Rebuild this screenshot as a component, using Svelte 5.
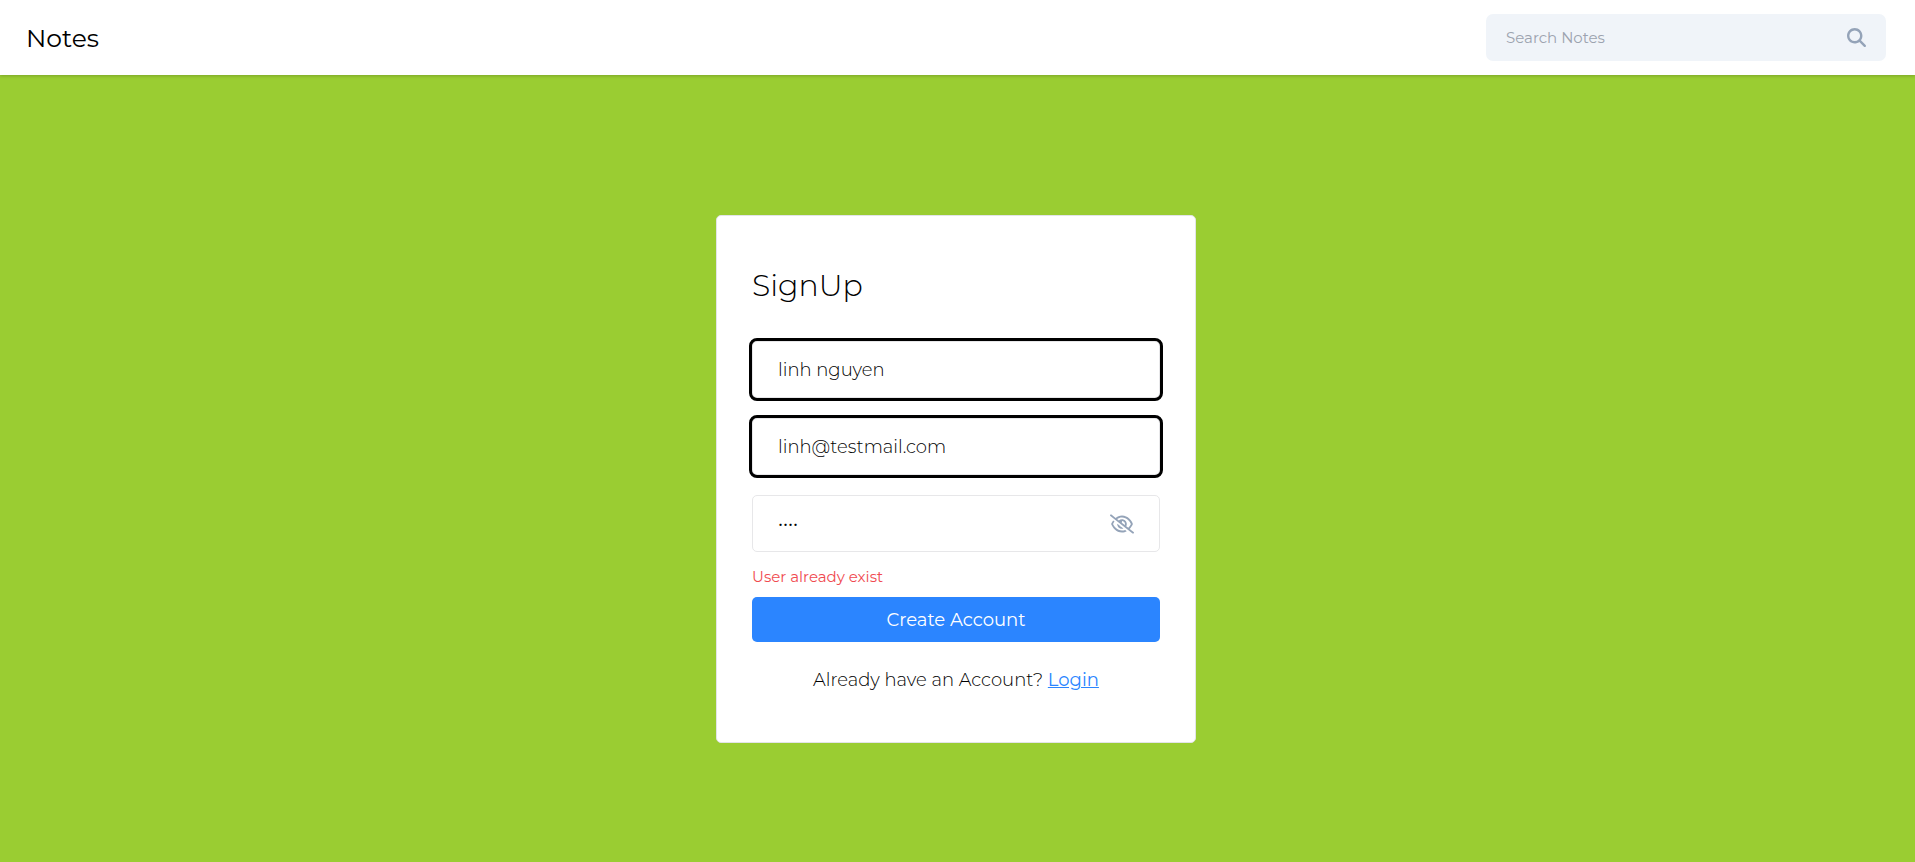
<script>
  let query = $state('');
  let name = $state('linh nguyen');
  let email = $state('linh@testmail.com');
  let password = $state('1234');
  let showPassword = $state(false);
  let error = $state('User already exist');
</script>

<div class="page">
  <header>
    <h2>Notes</h2>
    <form class="search" role="search" onsubmit={(e) => e.preventDefault()}>
      <input type="text" placeholder="Search Notes" aria-label="Search Notes" bind:value={query} />
      <button class="icon" type="submit" aria-label="Search">
        <svg width="19" height="19" viewBox="0 0 512 512" fill="currentColor" aria-hidden="true">
          <path d="M416 208c0 45.9-14.9 88.3-40 122.7L502.6 457.4c12.5 12.5 12.5 32.8 0 45.3s-32.8 12.5-45.3 0L330.7 376c-34.4 25.2-76.8 40-122.7 40C93.1 416 0 322.9 0 208S93.1 0 208 0S416 93.1 416 208zM208 352a144 144 0 1 0 0-288 144 144 0 1 0 0 288z" />
        </svg>
      </button>
    </form>
  </header>

  <main>
    <form class="card" onsubmit={(e) => e.preventDefault()}>
      <h1>SignUp</h1>
      <input class="field active" type="text" placeholder="Name" aria-label="Name" bind:value={name} />
      <input class="field active" type="text" placeholder="Email" aria-label="Email" bind:value={email} />
      <div class="field password">
        <input
          type={showPassword ? 'text' : 'password'}
          placeholder="Password"
          aria-label="Password"
          bind:value={password}
        />
        <button
          class="icon"
          type="button"
          aria-label="Toggle password visibility"
          onclick={() => (showPassword = !showPassword)}
        >
          <svg width="24" height="24" viewBox="0 0 640 512" fill="currentColor" aria-hidden="true">
            <path d="M38.8 5.1C28.4-3.1 13.3-1.2 5.1 9.2S-1.2 34.7 9.2 42.9l592 464c10.4 8.2 25.5 6.3 33.7-4.1s6.3-25.5-4.1-33.7L525.6 386.7c39.6-40.6 66.4-86.1 79.9-118.4c3.3-7.9 3.3-16.7 0-24.6c-14.9-35.7-46.2-87.7-93-131.1C465.5 68.8 400.8 32 320 32c-68.2 0-125 26.3-169.3 60.8L38.8 5.1zm151 118.3C226 97.7 269.5 80 320 80c65.2 0 118.8 29.6 159.9 67.7C518.4 183.5 545 226 558.6 256c-12.6 28-36.6 66.8-70.9 100.9l-53.8-42.2c9.1-17.6 14.2-37.5 14.2-58.7c0-70.7-57.3-128-128-128c-32.2 0-61.7 11.9-84.2 31.5l-46.1-36.1zM394.9 284.2l-81.5-63.9c4.2-8.5 6.6-18.2 6.6-28.3c0-5.5-.7-10.9-2-16c.7 0 1.3 0 2 0c44.2 0 80 35.8 80 80c0 9.9-1.8 19.4-5.1 28.2zm9.4 130.3C378.8 425.4 350.7 432 320 432c-65.2 0-118.8-29.6-159.9-67.7C121.6 328.5 95 286 81.4 256c8.3-18.4 21.5-41.5 39.4-64.8L83.1 161.5C60.3 191.2 44 220.8 34.5 243.7c-3.3 7.9-3.3 16.7 0 24.6c14.9 35.7 46.2 87.7 93 131.1C174.5 443.2 239.2 480 320 480c47.8 0 89.9-12.9 126.2-32.5l-41.9-33zM192 256c0 70.7 57.3 128 128 128c13.3 0 26.1-2 38.2-5.8L302 334c-23.5-5.4-43.1-21.2-53.7-42.3l-56.1-44.2c-.2 2.8-.3 5.6-.3 8.5z" />
          </svg>
        </button>
      </div>
      {#if error}
        <p class="error">{error}</p>
      {/if}
      <button class="submit" type="submit">Create Account</button>
      <p class="switch">Already have an Account? <a href="#login">Login</a></p>
    </form>
  </main>
</div>

<style>
  :global(body) {
    margin: 0;
    background: #9acd32;
  }

  .page,
  .page * {
    box-sizing: border-box;
  }

  .page {
    display: flex;
    flex-direction: column;
    min-height: 100vh;
    font-family: Montserrat, Inter, sans-serif;
    font-size: 18px;
    line-height: 24px;
    color: #000;
  }

  header {
    display: flex;
    align-items: center;
    justify-content: space-between;
    padding: 14px 29px 14px 26px;
    background: #fff;
    box-shadow: 0 1px 3px rgba(0, 0, 0, 0.2);
  }

  h1,
  h2,
  p {
    margin: 0;
  }

  h2 {
    font-size: 25px;
    line-height: 32px;
    font-weight: 400;
  }

  input,
  button {
    font: inherit;
    color: inherit;
  }

  input {
    min-width: 0;
    padding: 0;
    border: 0;
    background: transparent;
    outline: none;
  }

  .search {
    display: flex;
    align-items: center;
    width: 400px;
    height: 47px;
    padding: 0 20px;
    border-radius: 7px;
    background: #f0f4f9;
  }

  .search input {
    flex: 1;
    font-size: 15px;
  }

  .search input::placeholder {
    color: #9ca3af;
    opacity: 1;
  }

  .icon {
    display: flex;
    padding: 0;
    border: 0;
    background: none;
    color: #94a3b8;
    cursor: pointer;
  }

  main {
    display: flex;
    justify-content: center;
    padding: 140px 3px 40px 0;
  }

  .card {
    display: flex;
    flex-direction: column;
    width: 480px;
    padding: 50px 35px;
    border: 1px solid #e2e4e8;
    border-radius: 5px;
    background: #fff;
  }

  h1 {
    margin-bottom: 35px;
    font-size: 30px;
    line-height: 40px;
    font-weight: 300;
  }

  .field {
    height: 57px;
    margin-bottom: 20px;
    padding: 0 25px;
    border: 1px solid #e7e7e9;
    border-radius: 5px;
    font-weight: 300;
  }

  .active {
    outline: 3px solid #000;
  }

  .password {
    display: flex;
    align-items: center;
    margin-bottom: 13px;
  }

  .password input {
    flex: 1;
  }

  .error {
    padding-bottom: 8px;
    font-size: 15px;
    color: #f04a50;
  }

  .submit {
    height: 45px;
    border: 0;
    border-radius: 5px;
    background: #2b85ff;
    color: #fff;
    cursor: pointer;
  }

  .switch {
    margin-top: 26px;
    text-align: center;
    font-weight: 300;
  }

  .switch a {
    font-weight: 400;
    color: #2b85ff;
    text-decoration: underline;
  }
</style>
